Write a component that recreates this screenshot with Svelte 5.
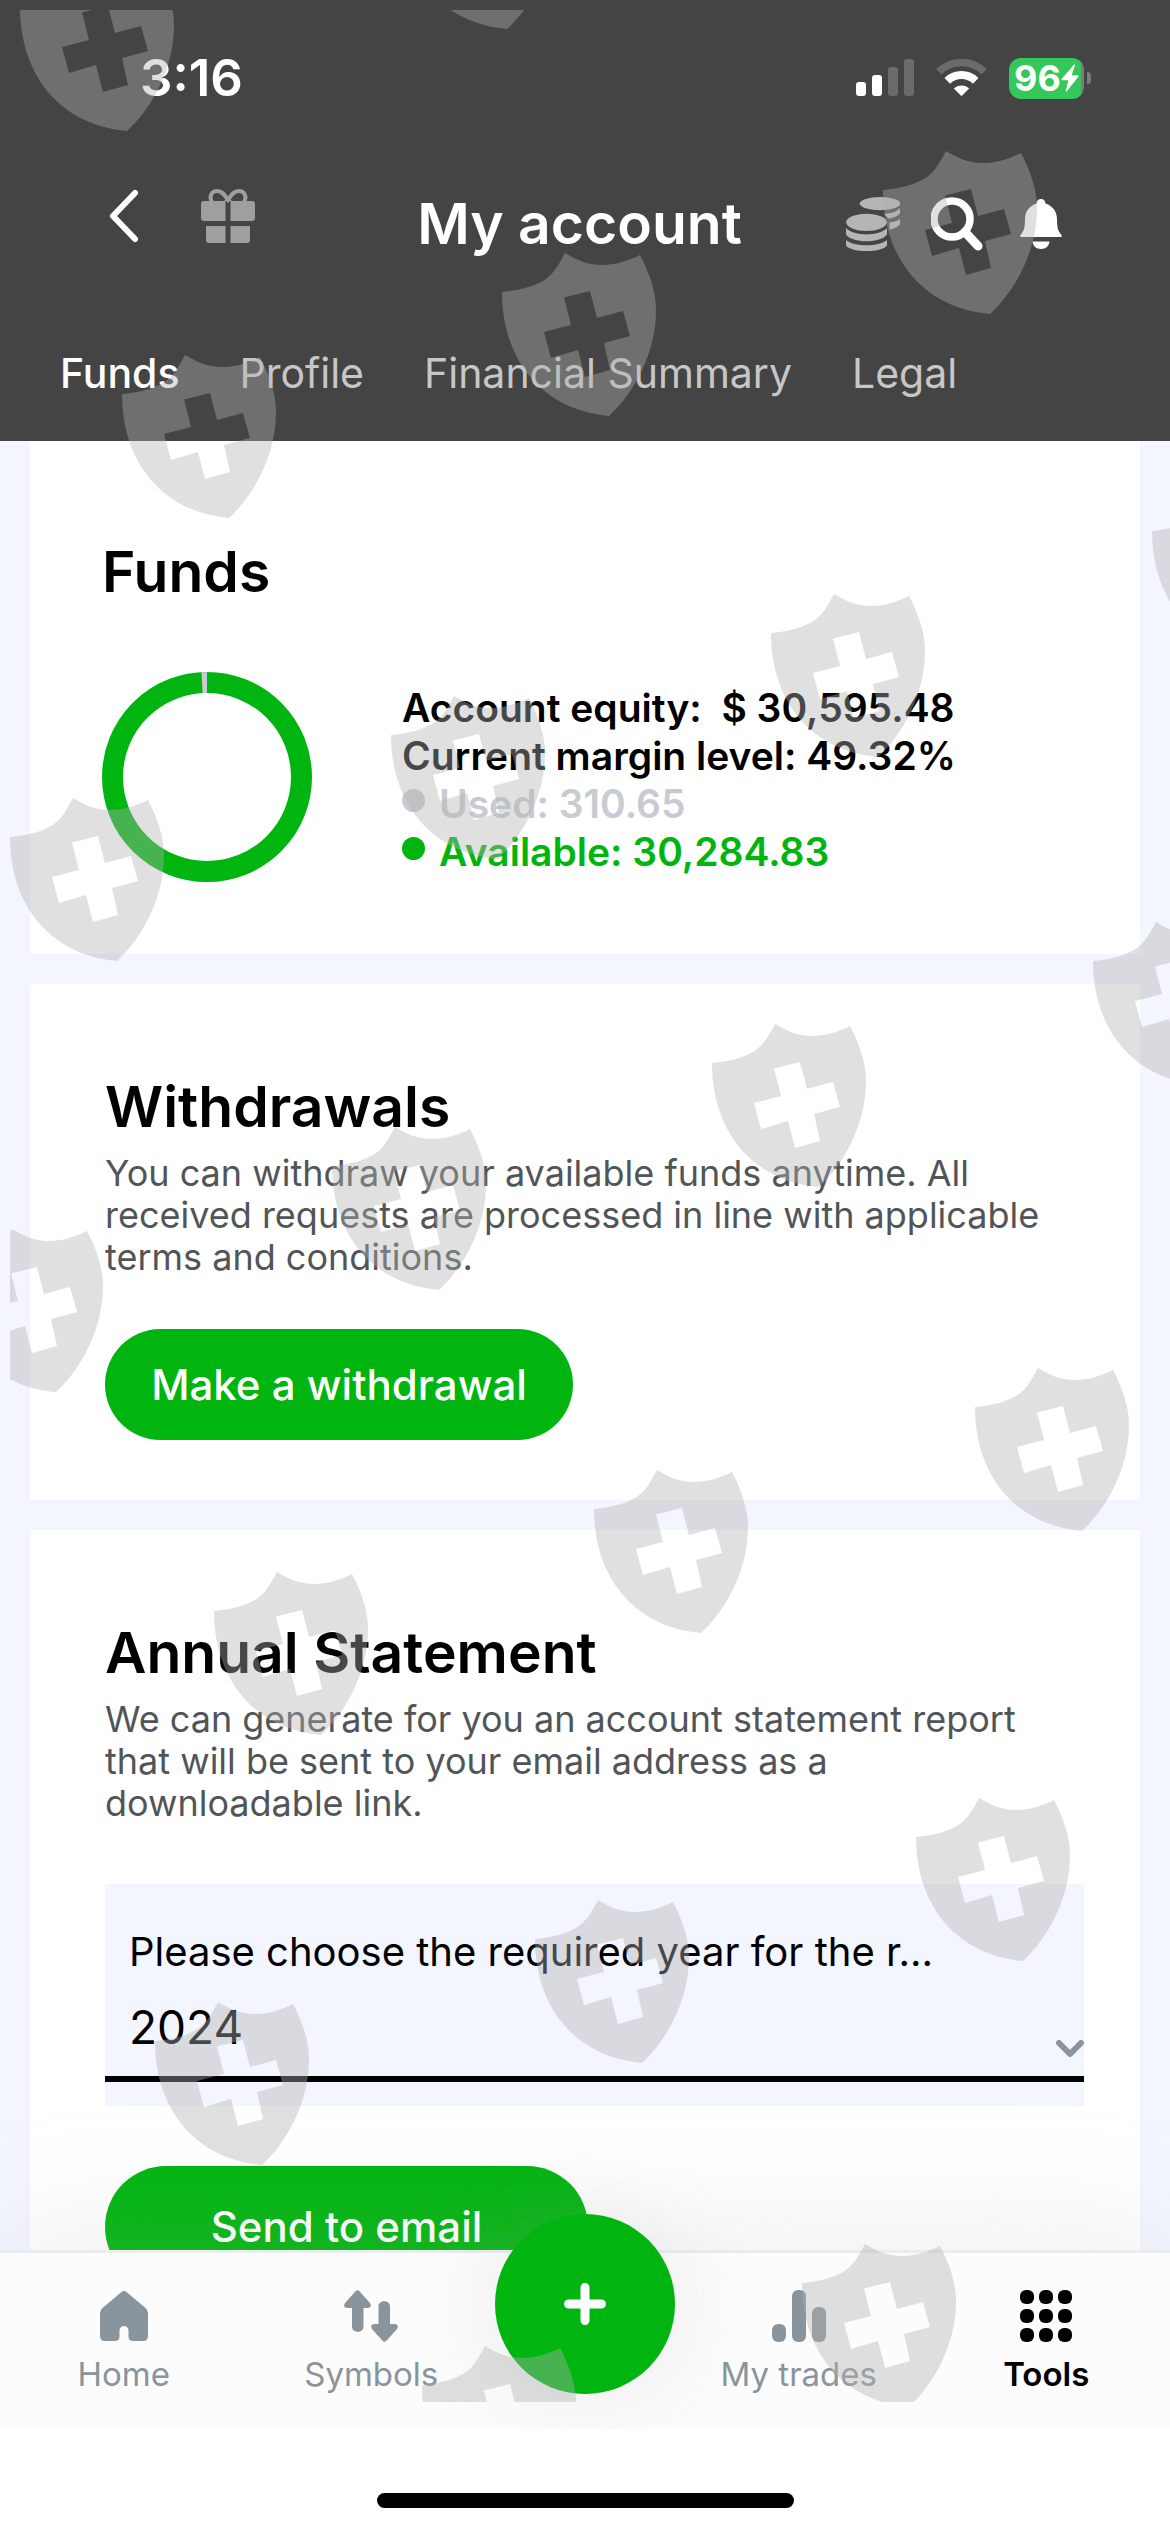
<script>
  const tabs = ['Funds', 'Profile', 'Financial Summary', 'Legal'];
  let active = $state('Funds');
  let year = $state('2024');

  const equity = 30595.48;
  const used = 310.65;
  const radius = 94.5;
  const circumference = 2 * Math.PI * radius;
  const usedLength = (used / equity) * circumference;

  const shields = [
    [10, -3], [390, -105], [873, 180], [492, 282], [112, 384],
    [1142, 521], [761, 623], [381, 725], [0, 827],
    [1083, 951], [702, 1053], [322, 1156], [-61, 1258],
    [965, 1397], [584, 1499], [204, 1601],
    [906, 1827], [525, 1929], [145, 2031],
    [792, 2273], [412, 2375]
  ];
</script>

<div class="page">
  <header>
    <div class="status">
      <span class="time">3:16</span>
      <div class="indicators">
        <svg width="58" height="38" viewBox="0 0 58 38" aria-hidden="true">
          <rect x="0" y="23" width="10" height="14" rx="3" fill="#fff" />
          <rect x="16" y="16" width="10" height="21" rx="3" fill="#fff" />
          <rect x="32" y="8" width="10" height="29" rx="3" fill="#6b6b6b" />
          <rect x="48" y="0" width="10" height="37" rx="3" fill="#6b6b6b" />
        </svg>
        <svg width="51" height="38" viewBox="0 0 51 38" aria-hidden="true">
          <path d="M2.8 12.8 A32.5 32.5 0 0 1 48.2 12.8" fill="none" stroke="#6b6b6b" stroke-width="7.5" />
          <path d="M11.3 21.8 A20.5 20.5 0 0 1 39.7 21.8" fill="none" stroke="#fff" stroke-width="8" />
          <path d="M17.8 29.6 A11 11 0 0 1 33.2 29.6 L26.2 36.6 Q25.5 37.2 24.8 36.6 Z" fill="#fff" />
        </svg>
        <div class="battery">
          <span class="level">96</span>
          <svg class="bolt" width="18" height="28" viewBox="0 0 18 28" aria-hidden="true">
            <path d="M13 .5 L.6 15 Q0 16.2 1.2 16.2 H7.4 L4.6 27 Q5 28 6 27 L17.5 12.6 Q18 11.4 16.8 11.3 H10.7 L14 1.5 Q14 .2 13 .5Z" fill="#fff" />
          </svg>
        </div>
        <span class="nub"></span>
      </div>
    </div>

    <div class="bar">
      <div class="left">
        <button class="icon back" aria-label="Back">
          <svg width="30" height="54" viewBox="0 0 30 54"><path d="M26 4 L4 27 L26 50" fill="none" stroke="#fff" stroke-width="6" stroke-linecap="round" stroke-linejoin="round" /></svg>
        </button>
        <button class="icon" aria-label="Rewards">
          <svg width="54" height="54" viewBox="0 0 54 54">
            <g fill="#9f9f9f">
              <path d="M3 12 H24.500 V32 H3 Q0 32 0 29 V15 Q0 12 3 12Z" />
              <path d="M29.500 12 H51 Q54 12 54 15 V29 Q54 32 51 32 H29.500Z" />
              <path d="M5 37 H24.500 V54 H8 Q5 54 5 51Z" />
              <path d="M29.500 37 H49 V51 Q49 54 46 54 H29.500Z" />
            </g>
            <path d="M11 13 C7.500 7 11 2 16 2 C22 2 24 7 27 11 C30 7 32 2 38 2 C43 2 46.500 7 43 13" fill="none" stroke="#9f9f9f" stroke-width="4" />
            <path d="M23 12 L27 8 L31 12Z" fill="#9f9f9f" />
          </svg>
        </button>
      </div>
      <h1>My account</h1>
      <div class="right">
        <button class="icon" aria-label="Balance">
          <svg width="54" height="54" viewBox="0 0 54 54" fill="#b5b5b5">
            <ellipse cx="34" cy="6.600" rx="20.300" ry="6.600" />
            <path d="M54 11 V15.500 C54 18.500 48 20.800 42 21.600 C41 19.500 39.500 18 37.500 17 C45 16.500 51.500 14.500 54 11Z" />
            <path d="M54 22 V27 C52 30 48.500 31.500 43.500 32.500 V25.500 C48 25 52 24 54 22Z" />
            <ellipse cx="20.500" cy="25.300" rx="20.300" ry="8.600" />
            <path d="M0 31 C8 39.500 33 39.500 41 31 V37.500 C35 46.500 6 46.500 0 37.500Z" />
            <path d="M0 43 C8 50 33 50 41 43 V48.500 C35 56 6 56 0 48.500Z" />
          </svg>
        </button>
        <button class="icon" aria-label="Search">
          <svg width="58" height="54" viewBox="0 0 58 54" fill="none" stroke="#fff">
            <circle cx="21" cy="22" r="18" stroke-width="7.500" />
            <path d="M34 35 L47 49" stroke-width="9" stroke-linecap="round" />
          </svg>
        </button>
        <button class="icon" aria-label="Notifications">
          <svg width="42" height="50" viewBox="0 0 42 50" fill="#fff">
            <path d="M21 0 C23.500 0 25.500 2 25.500 4.500 C33 7 37 13 37 20 C37 29 38 32 41.500 36 Q42.500 38 40.500 38 H1.500 Q-.5 38 .5 36 C4 32 5 29 5 20 C5 13 9 7 16.500 4.500 C16.500 2 18.500 0 21 0Z" />
            <path d="M12.500 42.500 H29.500 C29 47 26 50 21 50 C16 50 13 47 12.500 42.500Z" />
          </svg>
        </button>
      </div>
    </div>

    <nav class="tabs" aria-label="Account sections">
      {#each tabs as tab}
        <button class:active={active === tab} onclick={() => (active = tab)}>{tab}</button>
      {/each}
    </nav>
  </header>

  <main>
    <section class="card funds">
      <h2>Funds</h2>
      <div class="overview">
        <svg class="ring" width="210" height="210" viewBox="0 0 210 210" role="img" aria-label="Used and available funds">
          <circle cx="105" cy="105" r={radius} fill="none" stroke="#00b50f" stroke-width="21" />
          <circle cx="105" cy="105" r={radius} fill="none" stroke="#c8cbd0" stroke-width="21"
            stroke-dasharray="{usedLength} {circumference}" stroke-dashoffset={usedLength - circumference} transform="rotate(-90 105 105)" />
        </svg>
        <ul>
          <li>Account equity:&nbsp; $ 30,595.48</li>
          <li>Current margin level: 49.32%</li>
          <li class="used"><span class="dot"></span>Used: 310.65</li>
          <li class="available"><span class="dot"></span>Available: 30,284.83</li>
        </ul>
      </div>
    </section>

    <section class="card">
      <h2>Withdrawals</h2>
      <p>You can withdraw your available funds anytime. All received requests are processed in line with applicable terms and conditions.</p>
      <button class="pill withdraw">Make a withdrawal</button>
    </section>

    <section class="card">
      <h2>Annual Statement</h2>
      <p>We can generate for you an account statement report that will be sent to your email address as a downloadable link.</p>
      <div class="field">
        <label for="year">Please choose the required year for the r...</label>
        <div class="choice">
          <select id="year" bind:value={year}>
            <option>2024</option>
            <option>2023</option>
            <option>2022</option>
          </select>
          <svg class="chevron" width="28" height="18" viewBox="0 0 28 18" aria-hidden="true"><path d="M3 3 L14 14 L25 3" fill="none" stroke="#8a949c" stroke-width="6" stroke-linecap="round" stroke-linejoin="round" /></svg>
        </div>
      </div>
      <button class="pill send">Send to email</button>
    </section>
  </main>

  <nav class="dock" aria-label="Main">
    <a href="#home">
      <svg width="48" height="52" viewBox="0 0 48 52" fill="#8a949c"><path d="M21.500 2 Q24 0 26.500 2 L45.500 18 Q48 20.200 48 23 V46 Q48 51 43 51 H33 Q28.500 51 28.500 46.500 V40.500 C28.500 34.500 19.500 34.500 19.500 40.500 V46.500 Q19.500 51 15 51 H5 Q0 51 0 46 V23 Q0 20.200 2.500 18Z" /></svg>
      <span>Home</span>
    </a>
    <a href="#symbols">
      <svg width="54" height="52" viewBox="0 0 54 52" fill="#8a949c">
        <path d="M11.500 1.200 Q13.500-.8 15.500 1.200 L26 13 Q28.500 17.500 24 18 H19.500 V36.500 C19.500 43.500 8 43.500 8 36.500 V18 H3 Q-1.500 17.500 1 13Z" />
        <path d="M38.500 50.800 Q40.500 52.800 42.500 50.800 L53 39 Q55.500 34.500 51 34 H46 V16.500 C46 9.500 34.500 9.500 34.500 16.500 V34 H30 Q25.500 34.500 28 39Z" />
      </svg>
      <span>Symbols</span>
    </a>
    <button class="add" aria-label="New trade">
      <svg width="42" height="42" viewBox="0 0 42 42"><path d="M21 4.500 V37.500 M4.500 21 H37.500" stroke="#fff" stroke-width="9" stroke-linecap="round" /></svg>
    </button>
    <a href="#trades">
      <svg width="54" height="52" viewBox="0 0 54 52" fill="#8a949c">
        <rect x="0" y="34" width="14" height="18" rx="6" />
        <rect x="20" y="0" width="14" height="52" rx="6" />
        <rect x="40" y="17" width="14" height="35" rx="6" />
      </svg>
      <span>My trades</span>
    </a>
    <a href="#tools" class="current">
      <svg width="52" height="52" viewBox="0 0 52 52" fill="#000">
        {#each [0, 19, 38] as y}
          {#each [0, 19, 38] as x}
            <rect {x} {y} width="14" height="14" rx="6" />
          {/each}
        {/each}
      </svg>
      <span>Tools</span>
    </a>
  </nav>

  <div class="home"><span></span></div>

  <svg class="watermark" aria-hidden="true">
    <defs>
      <path id="shield" fill-rule="evenodd" d="M0 0 C20 -2 32 -6 41 -11 C51 -17 56 -26 63 -39 C75 -32 85 -27 100 -27 C113 -27 126 -31 138 -37 C149 -16 154 2 154 18 C154 60 133 100 107 124 C40 118 0 68 0 0Z M62 5.500 L88 -1 L95 26 L121 19 L128 44 L102 51 L108 78 L83 85 L76 58 L49 66 L42 40 L69 33Z" />
    </defs>
    {#each shields as [x, y]}
      <use href="#shield" {x} {y} />
    {/each}
  </svg>
</div>

<style>
  :global(body) {
    background: #fff;
  }

  .page {
    position: relative;
    display: flex;
    flex-direction: column;
    height: 100vh;
    overflow: hidden;
    background: #f3f6ff;
    color: #000;
    font-family: Inter, 'Liberation Sans', sans-serif;
  }

  button,
  select {
    margin: 0;
    padding: 0;
    border: 0;
    border-radius: 0;
    background: none;
    color: inherit;
    font: inherit;
  }

  svg {
    display: block;
    flex: none;
  }

  header {
    flex: none;
    padding: 48px 0 38px;
    background: #444;
    color: #fff;
  }

  .status {
    display: flex;
    justify-content: space-between;
    align-items: center;
    height: 60px;
    padding: 0 79px 0 140px;
  }

  .time {
    font-size: 51px;
    line-height: 60px;
    font-weight: 600;
  }

  .indicators {
    display: flex;
    align-items: center;
  }

  .indicators > svg {
    margin-right: 22px;
  }

  .battery {
    display: flex;
    align-items: center;
    justify-content: center;
    width: 75px;
    height: 41px;
    border-radius: 12px;
    background: linear-gradient(90deg, #34c759 96%, #7c7c7c 96%);
  }

  .level {
    font-size: 36px;
    line-height: 41px;
    font-weight: 700;
  }

  .nub {
    width: 4px;
    height: 12px;
    margin-left: 3px;
    border-radius: 0 4px 4px 0;
    background: #7c7c7c;
  }

  .bar {
    display: grid;
    grid-template-columns: 1fr auto 1fr;
    align-items: center;
    height: 80px;
    margin-top: 76px;
    padding: 0 108px 0 97px;
  }

  .left {
    display: flex;
    gap: 62px;
    padding-bottom: 16px;
  }

  .back {
    padding-left: 12px;
  }

  .right {
    display: flex;
    justify-content: flex-end;
    align-items: center;
    gap: 31px;
  }

  h1 {
    margin: 0;
    font-size: 57px;
    line-height: 80px;
    font-weight: 600;
  }

  .tabs {
    display: flex;
    gap: 60px;
    margin-top: 79px;
    padding-left: 60px;
  }

  .tabs button {
    font-size: 41px;
    line-height: 60px;
    color: #c7c7c7;
    white-space: nowrap;
  }

  .tabs .active {
    color: #fff;
    font-weight: 500;
  }

  main {
    display: flex;
    flex: 1;
    flex-direction: column;
    gap: 30px;
    min-height: 0;
    padding: 0 30px;
    overflow: hidden;
  }

  .card {
    flex: none;
    padding: 87px 56px 60px 75px;
    background: #fff;
  }

  .funds {
    padding: 95px 72px 72px;
  }

  h2 {
    margin: 0;
    font-size: 57px;
    line-height: 72px;
    font-weight: 600;
  }

  .overview {
    display: flex;
    gap: 90px;
    margin-top: 64px;
  }

  ul {
    margin: 0;
    padding: 12px 0 0;
    list-style: none;
    font-size: 39px;
    line-height: 48px;
    font-weight: 600;
    white-space: nowrap;
  }

  li {
    display: flex;
    align-items: center;
    gap: 14px;
  }

  .dot {
    width: 23px;
    height: 23px;
    margin-bottom: 7px;
    border-radius: 50%;
    background: currentColor;
  }

  .used {
    color: #c8cbd0;
  }

  .available {
    color: #00b50f;
  }

  p {
    max-width: 940px;
    margin: 9px 0 0;
    font-size: 36px;
    line-height: 42px;
    color: #515558;
  }

  .pill {
    display: block;
    border-radius: 62px;
    background: #00b50f;
    color: #fff;
    font-size: 42px;
    line-height: 42px;
    font-weight: 500;
  }

  .withdraw {
    min-width: 468px;
    height: 111px;
    margin-top: 51px;
  }

  .send {
    min-width: 483px;
    height: 122px;
    margin-top: 60px;
  }

  .field {
    margin-top: 60px;
    padding: 44px 0 24px;
    background: #f3f6ff;
  }

  label {
    display: block;
    padding-left: 24px;
    font-size: 40px;
    line-height: 48px;
  }

  .choice {
    display: grid;
  }

  .choice > * {
    grid-area: 1 / 1;
  }

  select {
    width: 100%;
    height: 106px;
    padding: 2px 0 0 24px;
    border-bottom: 6px solid #000;
    appearance: none;
    font-size: 46px;
  }

  .chevron {
    place-self: end;
    margin-bottom: 24px;
    pointer-events: none;
  }

  .dock {
    position: relative;
    display: grid;
    flex: none;
    grid-template-columns: 1fr 1fr 180px 1fr 1fr;
    height: 176px;
    border-top: 3px solid #ebebf2;
    background: #fcfcfc;
    box-shadow: 0 0 140px rgba(170, 170, 170, 0.24);
  }

  .dock a {
    display: flex;
    flex-direction: column;
    align-items: center;
    gap: 12px;
    padding-top: 37px;
    color: #8a949c;
    font-size: 33px;
    line-height: 40px;
    text-decoration: none;
  }

  .dock .current {
    color: #000;
    font-weight: 600;
  }

  .add {
    display: grid;
    place-items: center;
    width: 180px;
    height: 180px;
    margin-top: -39px;
    border-radius: 50%;
    background: #00b50f;
    box-shadow: 0 0 90px rgba(150, 150, 150, 0.16);
  }

  .home {
    position: relative;
    display: flex;
    flex: none;
    justify-content: center;
    padding: 64px 0 24px;
    background: #fff;
  }

  .home span {
    width: 417px;
    height: 15px;
    border-radius: 8px;
    background: #000;
  }

  /* Translucent shield pattern laid over the whole screen */
  .watermark {
    position: absolute;
    top: 10px;
    left: 10px;
    width: calc(100% - 10px);
    height: calc(100% - 140px);
    overflow: hidden;
    fill: rgba(178, 178, 178, 0.4);
    pointer-events: none;
  }
</style>
